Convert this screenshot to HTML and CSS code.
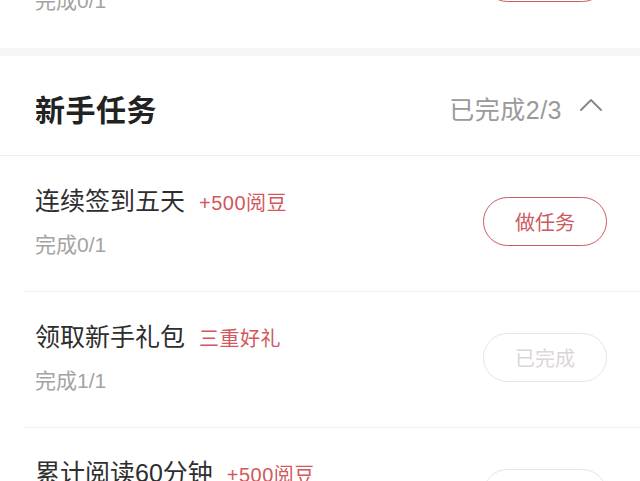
FILE: index.html
```html
<!DOCTYPE html>
<html lang="zh-CN">
<head>
<meta charset="utf-8">
<title>新手任务</title>
<link rel="stylesheet" href="styles.css">
</head>
<body>
<div class="page">
  <div class="task task-prev">
    <div class="task-info">
      <div class="task-title"><span class="name">每日阅读</span><span class="reward">+100阅豆</span></div>
      <div class="task-progress">完成0/1</div>
    </div>
    <button class="btn">做任务</button>
  </div>
  <div class="band"></div>
  <div class="section-head">
    <h2 class="section-title">新手任务</h2>
    <div class="section-status">
      <span>已完成2/3</span>
      <svg class="chevron" width="24" height="14" viewBox="0 0 24 14"><path d="M2 12 L12 2 L22 12" fill="none" stroke="#8a8a8a" stroke-width="2" stroke-linecap="round" stroke-linejoin="round"/></svg>
    </div>
  </div>
  <div class="task">
    <div class="task-info">
      <div class="task-title"><span class="name">连续签到五天</span><span class="reward">+500阅豆</span></div>
      <div class="task-progress">完成0/1</div>
    </div>
    <button class="btn">做任务</button>
  </div>
  <div class="task">
    <div class="task-info">
      <div class="task-title"><span class="name">领取新手礼包</span><span class="reward">三重好礼</span></div>
      <div class="task-progress">完成1/1</div>
    </div>
    <button class="btn btn-done">已完成</button>
  </div>
  <div class="task">
    <div class="task-info">
      <div class="task-title"><span class="name">累计阅读60分钟</span><span class="reward">+500阅豆</span></div>
      <div class="task-progress">完成1/1</div>
    </div>
    <button class="btn btn-done">已完成</button>
  </div>
</div>
</body>
</html>
```

FILE: styles.css
```css
html, body {
  margin: 0;
  padding: 0;
  background: #ffffff;
}
body {
  font-family: "Liberation Sans", "Noto Sans CJK SC", sans-serif;
  color: #333333;
  overflow: hidden;
  height: 481px;
}
.page {
  display: flex;
  flex-direction: column;
}
.task {
  display: flex;
  align-items: center;
  justify-content: space-between;
  height: 135px;
  margin-left: 24px;
  padding: 0 33px 0 11px;
  border-bottom: 1px solid #f0f0f0;
  box-sizing: content-box;
}
.task-prev {
  margin-top: -88px;
  height: 136px;
  border-bottom: none;
}
.task-info {
  display: flex;
  flex-direction: column;
  gap: 12px;
  margin-top: -4px;
}
.task-title {
  display: flex;
  align-items: baseline;
  gap: 14px;
  line-height: 32px;
}
.name {
  font-size: 25px;
  color: #2e2e2e;
}
.reward {
  font-size: 20px;
  letter-spacing: 0.5px;
  color: #d2585d;
}
.task-progress {
  font-size: 21px;
  line-height: 28px;
  color: #a3a3a3;
}
.btn {
  width: 124px;
  height: 49px;
  margin-bottom: 5px;
  border: 1.5px solid #cc5a5f;
  border-radius: 25px;
  background: #ffffff;
  color: #cc5a5f;
  font-family: "Noto Sans CJK SC", sans-serif;
  font-size: 20px;
  padding: 0;
}
.btn-done {
  border-color: #ebe3e3;
  color: #dcd6d6;
}
.band {
  height: 8px;
  background: #f5f5f5;
}
.section-head {
  display: flex;
  align-items: center;
  justify-content: space-between;
  height: 99px;
  padding: 0 37px 0 35px;
  border-bottom: 1px solid #eeeeee;
}
.section-title {
  margin: 4px 0 0;
  font-family: "Noto Sans CJK SC", sans-serif;
  font-size: 30px;
  font-weight: bold;
  color: #222222;
  letter-spacing: 0.5px;
}
.section-status {
  display: flex;
  align-items: center;
  gap: 17px;
  margin-top: 4px;
  font-size: 25px;
  letter-spacing: 0.5px;
  color: #9a9a9a;
}
.chevron {
  display: block;
  margin-top: -6px;
}
```
